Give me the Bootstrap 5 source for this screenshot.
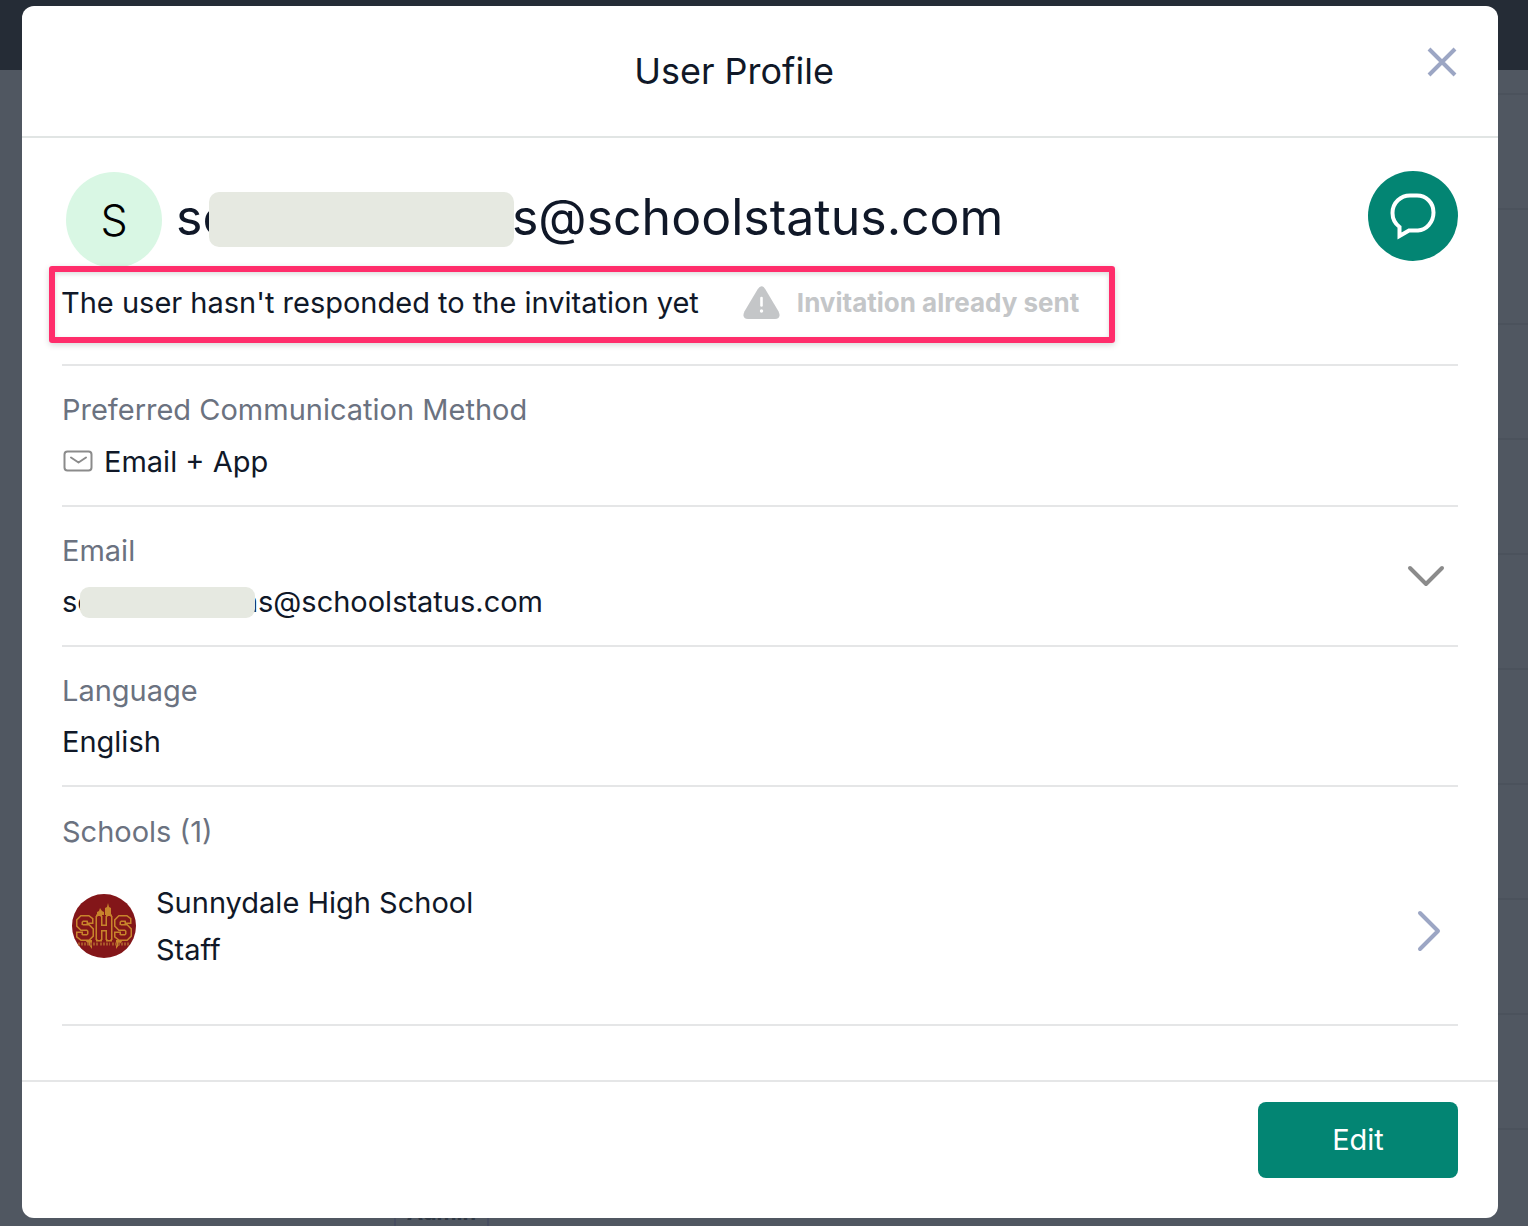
<!DOCTYPE html>
<html lang="en">
<head>
<meta charset="utf-8">
<meta name="viewport" content="width=device-width, initial-scale=1">
<title>User Profile</title>
<link href="https://cdn.jsdelivr.net/npm/bootstrap@5.3.0/dist/css/bootstrap.min.css" rel="stylesheet">
<style>
  body { font-family: Inter, "Liberation Sans", sans-serif; font-size: 29px; line-height: 40px; color: #101828; background: #505761; }
  .app-behind { background: #505761; z-index: 0; }
  .app-bar { height: 70px; background: #252c36; }
  .app-row { height: 115px; flex: none; margin-left: 216px; border-bottom: 2px solid #4b525c; }
  .app-row-first { height: 25px; }
  .role-chip { left: 394px; bottom: 0; width: 95px; height: 34px; border: 2px solid #474d60; border-bottom: 0; font-size: 22px; line-height: 36px; color: #2f3843; }
  .profile-shell { z-index: 1; padding: 6px 30px 8px 22px; }
  .profile-dialog { background: #fff; border-radius: 12px; }
  .dialog-head { height: 132px; padding: 0 40px; border-bottom: 2px solid #e1e5e4; }
  .dialog-title { font-size: 36px; line-height: 48px; font-weight: 400; }
  .bare-btn { background: none; border: 0; padding: 0; line-height: 0; }
  .close-btn { width: 32px; height: 32px; margin: 0 0 18px 20px; }
  .dialog-main { padding: 33px 40px 54px; }
  .who { height: 97px; }
  .avatar { width: 96px; height: 96px; margin: 1px 14px 0 4px; background: #d9f7e4; color: #000; font-size: 43px; font-weight: 300; }
  .who-name { font-size: 50px; line-height: 60px; font-weight: 400; margin-top: 16px; }
  .redacted { background: #e6e9e1; position: relative; flex: none; }
  .redacted-lg { width: 305px; height: 55px; border-radius: 10px; margin: 5px -2px 0 -22px; }
  .redacted-sm { width: 175px; height: 31px; border-radius: 9px; margin: 5px -14px 0 -14px; }
  .chat-btn { width: 90px; height: 90px; background: #038573; }
  .invite { width: fit-content; height: 77px; margin: -2px 0 21px -13px; padding: 0 30px 4px 6px; border: 6px solid #ff2d6b; border-radius: 3px; box-shadow: 0 2px 6px rgba(0,0,0,.16), inset 0 2px 5px rgba(0,0,0,.14); position: relative; }
  .resend { color: #c4c6c8; font-weight: 700; font-size: 26px; line-height: 40px; gap: 17px; margin-left: 44px; }
  .detail { border-top: 2px solid #e5e6e7; padding: 24px 0 23px; }
  .detail dt, .detail-label { font-weight: 400; color: #6b7280; }
  .detail dt { margin-bottom: 11px; }
  .detail-method dt { margin-bottom: 12px; }
  .detail dd { margin: 0; }
  .toggle-btn { width: 40px; height: 40px; margin-right: 12px; }
  .schools { border-bottom: 2px solid #e5e6e7; padding: 25px 0 51px; }
  .school-link { color: inherit; line-height: 47px; margin-top: 27px; padding: 0 9px 0 10px; gap: 20px; }
  .dialog-foot { border-top: 2px solid #e5e6e7; padding: 20px 40px 40px; }
  .edit-btn { width: 200px; height: 76px; font-size: 29px; border-radius: 8px; color: #fff; background: #038573; --bs-btn-hover-color: #fff; --bs-btn-hover-bg: #02705f; }
</style>
<script defer src="https://cdn.jsdelivr.net/npm/bootstrap@5.3.0/dist/js/bootstrap.bundle.min.js"></script>
</head>
<body class="position-relative min-vh-100">
<div class="app-behind position-absolute top-0 start-0 w-100 h-100 overflow-hidden d-flex flex-column" aria-hidden="true">
  <div class="app-bar flex-shrink-0"></div>
  <div class="app-row app-row-first"></div>
  <div class="app-row"></div><div class="app-row"></div><div class="app-row"></div>
  <div class="app-row"></div><div class="app-row"></div><div class="app-row"></div>
  <div class="app-row"></div><div class="app-row"></div><div class="app-row"></div>
  <div class="role-chip position-absolute text-center fw-bold">Admin</div>
</div>

<div class="profile-shell position-relative">
  <div class="profile-dialog" role="dialog" aria-labelledby="dialogTitle">
    <header class="dialog-head d-flex align-items-center">
      <h1 class="dialog-title flex-grow-1 text-center mb-0" id="dialogTitle">User Profile</h1>
      <button type="button" class="bare-btn close-btn" aria-label="Close">
        <svg width="32" height="32" viewBox="0 0 32 32" fill="none" stroke="#9ca6c4" stroke-width="4"><path d="M3 3l26 26M29 3l-26 26"/></svg>
      </button>
    </header>

    <main class="dialog-main">
      <div class="who d-flex align-items-start">
        <div class="avatar rounded-circle d-flex align-items-center justify-content-center flex-shrink-0">S</div>
        <h2 class="who-name d-flex mb-0 flex-grow-1"><span>sc</span><span class="redacted redacted-lg"></span><span>s@schoolstatus.com</span></h2>
        <button type="button" class="bare-btn chat-btn rounded-circle d-flex align-items-center justify-content-center flex-shrink-0" aria-label="Message">
          <svg width="50" height="50" viewBox="0 0 50 50" fill="none" stroke="#fff" stroke-width="4"><path d="M22 4.500H29C38 4.500 45.500 11.500 45.500 21.500C45.500 31.500 38 39 30 39.500H21L11.500 45V36C7 32.500 4.500 28.500 4.500 22C4.500 11.500 13 4.500 22 4.500Z"/></svg>
        </button>
      </div>

      <div class="invite d-flex align-items-center">
        <span>The user hasn't responded to the invitation yet</span>
        <button type="button" class="bare-btn resend d-flex align-items-center" disabled>
          <svg width="37" height="34" viewBox="0 0 37 34"><path fill="#c4c6c8" d="M14.800 3Q18.500-2.500 22.200 3L35.600 25.500Q38.500 32.500 32 33H5Q-1.500 32.500 1.400 25.500Z"/><path d="M18.500 12v7.500" stroke="#fff" stroke-width="2.600" stroke-linecap="round"/><circle cx="18.500" cy="25" r="1.700" fill="#fff"/></svg>
          <span>Invitation already sent</span>
        </button>
      </div>

      <dl class="detail detail-method mb-0">
        <dt>Preferred Communication Method</dt>
        <dd class="d-flex align-items-center">
          <svg class="me-2 flex-shrink-0" width="34" height="24" viewBox="0 0 34 24" fill="none" stroke="#8b8b8b" stroke-width="2"><rect x="2.500" y="1.500" width="27" height="19" rx="3"/><path d="M9 7.500l7.500 5L24 7.500" stroke-linecap="round" stroke-linejoin="round"/></svg>
          <span>Email + App</span>
        </dd>
      </dl>

      <div class="detail d-flex align-items-center">
        <dl class="mb-0 flex-grow-1">
          <dt>Email</dt>
          <dd class="d-flex"><span>sc</span><span class="redacted redacted-sm"></span><span>ns@schoolstatus.com</span></dd>
        </dl>
        <button type="button" class="bare-btn toggle-btn" aria-label="Show more email details">
          <svg width="40" height="40" viewBox="0 0 40 40" fill="none" stroke="#8b8b8b" stroke-width="4" stroke-linecap="round" stroke-linejoin="round"><path d="M4 11l16 16 16-16"/></svg>
        </button>
      </div>

      <dl class="detail mb-0">
        <dt>Language</dt>
        <dd>English</dd>
      </dl>

      <section class="detail schools">
        <div class="detail-label">Schools (1)</div>
        <a href="#" class="school-link d-flex align-items-center text-decoration-none">
          <svg class="flex-shrink-0" width="64" height="64" viewBox="0 0 64 64" role="img" aria-label="Sunnydale High School crest">
            <circle cx="32" cy="32" r="32" fill="#831619"/>
            <g fill="#c8842c"><path d="M25 21v-3l2-1 1-3 2 3 2 1v3zM33 21v-7l2-1 1-4 1 4 2 1v7zM13 46h7v9l-3-4zM51 46h-7v9l3-4z"/></g>
            <g fill="none" stroke="#c8842c" stroke-width="7"><path d="M18 30v-4l-2-1.500h-6l-2.500 2.500v4l2.500 2.500h6l2.500 2.500v5l-2.500 2.500H10l-2.500-2v-4M27 22v24M37 22v24M27 34h10M24 24h6M34 24h6M24 44h6M34 44h6M56 30v-4l-2-1.500h-6l-2.500 2.500v4l2.500 2.500h6l2.500 2.500v5l-2.500 2.500h-6l-2.500-2v-4"/></g>
            <g fill="none" stroke="#831619" stroke-width="4"><path d="M18 28.500v-2.500l-2-1.500h-6l-2.500 2.500v4l2.500 2.500h6l2.500 2.500v5l-2.500 2.500H10l-2.500-2v-2.500M27 23v22M37 23v22M27 34h10M25.500 24h3M35.500 24h3M25.500 44h3M35.500 44h3M56 28.500v-2.500l-2-1.500h-6l-2.500 2.500v4l2.500 2.500h6l2.500 2.500v5l-2.500 2.500h-6l-2.500-2v-2.500"/></g>
            <path d="M6 50h20M28 50h10M40 50h18" stroke="#a9562a" stroke-width="3" stroke-dasharray="2 1"/>
          </svg>
          <span class="flex-grow-1">Sunnydale High School<br>Staff</span>
          <svg class="flex-shrink-0 mt-2" width="40" height="44" viewBox="0 0 40 44" fill="none" stroke="#9ca6c4" stroke-width="4" stroke-linecap="round" stroke-linejoin="round"><path d="M11 5l18 18-18 18"/></svg>
        </a>
      </section>
    </main>

    <footer class="dialog-foot d-flex justify-content-end">
      <button type="button" class="btn edit-btn">Edit</button>
    </footer>
  </div>
</div>
</body>
</html>
